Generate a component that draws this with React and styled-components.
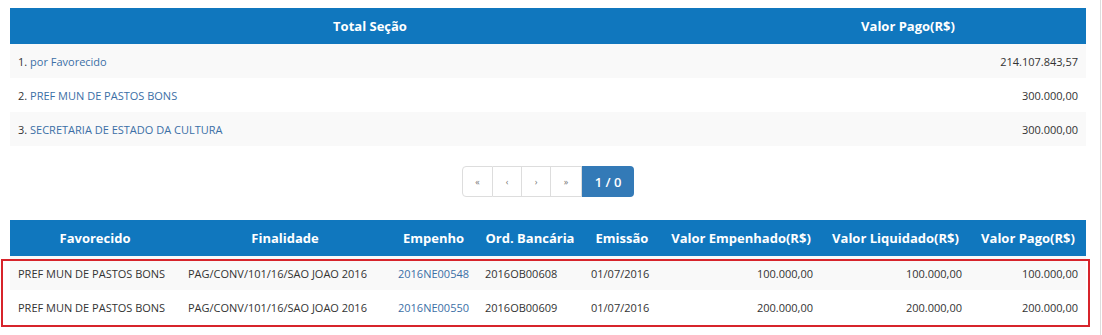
import React from 'react';
import styled, { createGlobalStyle } from 'styled-components';

const GlobalStyle = createGlobalStyle`
  body {
    margin: 0;
    background: #fff;
    font-family: "Open Sans", "Liberation Sans", sans-serif;
    font-size: 11px;
    color: #333;
  }
`;

const Page = styled.div`
  width: 1076px;
  padding: 8px 14px 0 10px;
  border-right: 1px solid #ddd;
  min-height: 327px;
`;

const Table = styled.table`
  width: 100%;
  border-collapse: collapse;
  table-layout: fixed;
`;

const HeadCell = styled.th`
  background: #1077be;
  color: #fff;
  font-weight: 700;
  font-size: 13px;
  text-align: center;
  height: 36px;
  padding: 0 8px;
  white-space: nowrap;
`;

const Row = styled.tr`
  background: ${p => (p.$odd ? '#f9f9f9' : '#fff')};
  & + & td {
    border-top: 1px solid #ddd;
  }
`;

const Cell = styled.td`
  height: 34px;
  padding: 0 8px;
  text-align: ${p => (p.$right ? 'right' : 'left')};
  white-space: nowrap;
  overflow: hidden;
`;

const Link = styled.a`
  color: #3b6fa6;
  text-decoration: none;
`;

const PagerWrap = styled.div`
  display: flex;
  justify-content: center;
  margin: 20px 0 23px;
`;

const Pager = styled.div`
  display: flex;
  height: 31px;
`;

const PageBtn = styled.span`
  display: flex;
  align-items: center;
  justify-content: center;
  width: ${p => p.$w}px;
  border: 1px solid #ddd;
  border-left-width: ${p => (p.$first ? 1 : 0)}px;
  border-radius: ${p => (p.$first ? '4px 0 0 4px' : '0')};
  color: #777;
  font-size: 9px;
  box-sizing: border-box;
`;

const ActiveBtn = styled.span`
  display: flex;
  align-items: center;
  justify-content: center;
  width: 52px;
  background: #337ab7;
  color: #fff;
  font-size: 13px;
  font-weight: 600;
  border-radius: 0 4px 4px 0;
`;

const Detail = styled.div`
  position: relative;
`;

const Highlight = styled.div`
  position: absolute;
  top: 39px;
  left: -9px;
  right: -4px;
  height: 68px;
  border: 2px solid #d7242b;
  box-sizing: border-box;
  pointer-events: none;
`;

const summary = [
  ['1.', 'por Favorecido', '214.107.843,57'],
  ['2.', 'PREF MUN DE PASTOS BONS', '300.000,00'],
  ['3.', 'SECRETARIA DE ESTADO DA CULTURA', '300.000,00'],
];

const cols = [170, 210, 87, 106, 78, 160, 149, 116];
const heads = ['Favorecido', 'Finalidade', 'Empenho', 'Ord. Bancária', 'Emissão', 'Valor Empenhado(R$)', 'Valor Liquidado(R$)', 'Valor Pago(R$)'];

const rows = [
  ['PREF MUN DE PASTOS BONS', 'PAG/CONV/101/16/SAO JOAO 2016', '2016NE00548', '2016OB00608', '01/07/2016', '100.000,00', '100.000,00', '100.000,00'],
  ['PREF MUN DE PASTOS BONS', 'PAG/CONV/101/16/SAO JOAO 2016', '2016NE00550', '2016OB00609', '01/07/2016', '200.000,00', '200.000,00', '200.000,00'],
];

export default function App() {
  return (
    <>
      <GlobalStyle />
      <Page>
        <Table>
          <colgroup>
            <col style={{ width: 720 }} />
            <col style={{ width: 356 }} />
          </colgroup>
          <thead>
            <tr>
              <HeadCell>Total Seção</HeadCell>
              <HeadCell>Valor Pago(R$)</HeadCell>
            </tr>
          </thead>
          <tbody>
            {summary.map(([n, name, val], i) => (
              <Row key={n} $odd={i % 2 === 0}>
                <Cell>
                  {n} <Link href="#">{name}</Link>
                </Cell>
                <Cell $right>{val}</Cell>
              </Row>
            ))}
          </tbody>
        </Table>

        <PagerWrap>
          <Pager>
            <PageBtn $w={31} $first>«</PageBtn>
            <PageBtn $w={29}>‹</PageBtn>
            <PageBtn $w={29}>›</PageBtn>
            <PageBtn $w={31}>»</PageBtn>
            <ActiveBtn>1 / 0</ActiveBtn>
          </Pager>
        </PagerWrap>

        <Detail>
          <Table>
            <colgroup>
              {cols.map((w, i) => (
                <col key={i} style={{ width: w }} />
              ))}
            </colgroup>
            <thead>
              <tr>
                {heads.map(h => (
                  <HeadCell key={h}>{h}</HeadCell>
                ))}
              </tr>
            </thead>
            <tbody>
              {rows.map((r, i) => (
                <Row key={i} $odd={i % 2 === 0}>
                  <Cell>{r[0]}</Cell>
                  <Cell>{r[1]}</Cell>
                  <Cell>
                    <Link href="#">{r[2]}</Link>
                  </Cell>
                  <Cell>{r[3]}</Cell>
                  <Cell>{r[4]}</Cell>
                  <Cell $right>{r[5]}</Cell>
                  <Cell $right>{r[6]}</Cell>
                  <Cell $right>{r[7]}</Cell>
                </Row>
              ))}
            </tbody>
          </Table>
          <Highlight />
        </Detail>
      </Page>
    </>
  );
}
